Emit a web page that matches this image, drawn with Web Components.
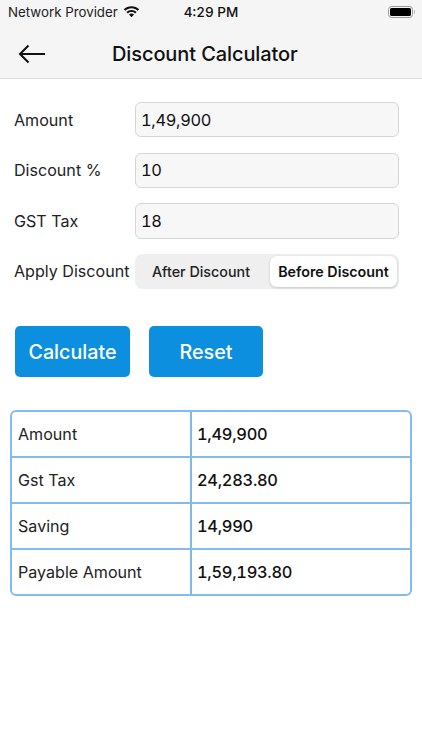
<!DOCTYPE html>
<html>
<head>
<meta charset="utf-8">
<style>
  html, body { margin: 0; background: #fff; }
  body { width: 422px; height: 750px; overflow: hidden; font-family: Inter, "Liberation Sans", sans-serif; color: #111; }
</style>
</head>
<body>
<calc-header title="Discount Calculator"></calc-header>
<calc-form>
  <calc-field label="Amount" value="1,49,900"></calc-field>
  <calc-field label="Discount %" value="10"></calc-field>
  <calc-field label="GST Tax" value="18"></calc-field>
  <calc-segment label="Apply Discount" first="After Discount" second="Before Discount"></calc-segment>
</calc-form>
<calc-actions>
  <calc-button style="width:115px">Calculate</calc-button>
  <calc-button style="width:114px">Reset</calc-button>
</calc-actions>
<calc-table>
  <calc-row label="Amount" value="1,49,900"></calc-row>
  <calc-row label="Gst Tax" value="24,283.80"></calc-row>
  <calc-row label="Saving" value="14,990"></calc-row>
  <calc-row label="Payable Amount" value="1,59,193.80"></calc-row>
</calc-table>
<script>
class CalcHeader extends HTMLElement {
  constructor() {
    super();
    this.attachShadow({ mode: "open" });
    this.shadowRoot.innerHTML = `
      <style>
        :host { display: block; height: 78px; background: #f5f5f5; border-bottom: 1px solid #dedede; }
        .status { height: 24px; display: flex; align-items: center; padding-left: 8px; font-size: 13.3px; color: #222; }
        .wifi { margin-left: 5px; flex: none; }
        .time { margin-left: 44px; font-size: 13.5px; font-weight: 500; font-feature-settings: "tnum"; color: #111; }
        .battery { margin-left: auto; margin-right: 6px; }
        .bar { height: 48px; padding-top: 6px; display: flex; align-items: center; padding-left: 18px; }
        .title { margin-left: 66px; font-size: 20px; font-weight: 500; letter-spacing: -.1px; color: #111; }
      </style>
      <div class="status">
        <span>Network Provider</span>
        <svg class="wifi" width="17" height="12" viewBox="0 0 17 12" fill="#111">
          <path d="M8.5 2.3c2.4 0 4.6.9 6.2 2.5L16.2 3.3C14.2 1.3 11.5.2 8.5.2S2.8 1.3.8 3.3l1.5 1.5c1.6-1.6 3.8-2.5 6.2-2.5z"/>
          <path d="M8.5 6c1.4 0 2.6.5 3.6 1.4l1.5-1.5C12.3 4.6 10.5 3.9 8.5 3.9s-3.8.7-5.1 2l1.5 1.5C5.9 6.5 7.1 6 8.5 6z"/>
          <path d="M8.5 7.6c-1 0-1.8.4-2.5 1l2.5 2.6L11 8.6c-.7-.6-1.5-1-2.5-1z"/>
        </svg>
        <span class="time">4:29 PM</span>
        <svg class="battery" width="28" height="12" viewBox="0 0 28 12">
          <rect x=".5" y=".5" width="24" height="11" rx="3" fill="none" stroke="#999"/>
          <rect x="2" y="2" width="21" height="8" rx="1.6" fill="#000"/>
          <path d="M26 4.2c.6.2 1 .9 1 1.8s-.4 1.6-1 1.8z" fill="#aaa"/>
        </svg>
      </div>
      <div class="bar">
        <svg width="28" height="20" viewBox="0 0 28 20" fill="none" stroke="#111" stroke-width="2">
          <path d="M27 10H2"/><path d="M10.5 1.5 2 10l8.5 8.5"/>
        </svg>
        <span class="title"></span>
      </div>`;
    this.shadowRoot.querySelector(".title").textContent = this.getAttribute("title");
  }
}

class CalcForm extends HTMLElement {
  constructor() {
    super();
    this.attachShadow({ mode: "open" });
    this.shadowRoot.innerHTML = `
      <style>
        :host { display: flex; flex-direction: column; gap: 15.2px; padding: 23px 23px 0 14px; }
      </style>
      <slot></slot>`;
  }
}

class CalcField extends HTMLElement {
  constructor() {
    super();
    this.attachShadow({ mode: "open" });
    this.shadowRoot.innerHTML = `
      <style>
        :host { display: flex; align-items: center; height: 35.4px; font-size: 16.1px; color: #222; }
        .label { width: 121px; flex: none; }
        .box { flex: 1; height: 100%; box-sizing: border-box; background: #f7f7f7; border: 1px solid #d6d6d6; border-radius: 6px; padding-left: 5px; display: flex; align-items: center; font-size: 16.4px; letter-spacing: -.3px; font-feature-settings: "tnum"; color: #111; }
      </style>
      <span class="label"></span>
      <div class="box"></div>`;
    this.shadowRoot.querySelector(".label").textContent = this.getAttribute("label");
    this.shadowRoot.querySelector(".box").textContent = this.getAttribute("value");
  }
}

class CalcSegment extends HTMLElement {
  constructor() {
    super();
    this.attachShadow({ mode: "open" });
    this.shadowRoot.innerHTML = `
      <style>
        :host { display: flex; align-items: center; height: 35.4px; font-size: 16.1px; color: #222; }
        .label { width: 121px; flex: none; white-space: nowrap; }
        .track { flex: 1; height: 100%; box-sizing: border-box; background: #efeff0; border-radius: 8px; padding: 2px; display: flex; font-size: 14.3px; font-weight: 500; color: #222; }
        .opt { display: flex; align-items: center; justify-content: center; white-space: nowrap; }
        .one { width: 128px; padding-right: 5px; }
        .two { flex: 1; background: #fff; border-radius: 7px; box-shadow: 0 1px 3px rgba(0,0,0,.18); color: #111; font-weight: 600; }
      </style>
      <span class="label"></span>
      <div class="track"><span class="opt one"></span><span class="opt two"></span></div>`;
    this.shadowRoot.querySelector(".label").textContent = this.getAttribute("label");
    this.shadowRoot.querySelector(".one").textContent = this.getAttribute("first");
    this.shadowRoot.querySelector(".two").textContent = this.getAttribute("second");
  }
}

class CalcActions extends HTMLElement {
  constructor() {
    super();
    this.attachShadow({ mode: "open" });
    this.shadowRoot.innerHTML = `
      <style>
        :host { display: flex; gap: 19px; padding: 37px 0 0 15px; }
      </style>
      <slot></slot>`;
  }
}

class CalcButton extends HTMLElement {
  constructor() {
    super();
    this.attachShadow({ mode: "open" });
    this.shadowRoot.innerHTML = `
      <style>
        :host { display: flex; align-items: center; justify-content: center; box-sizing: border-box; height: 50.5px; padding-top: 1px; background: #0d8fdf; border-radius: 5px; color: #fff; font-size: 19.7px; font-weight: 500; }
      </style>
      <slot></slot>`;
  }
}

class CalcTable extends HTMLElement {
  constructor() {
    super();
    this.attachShadow({ mode: "open" });
    this.shadowRoot.innerHTML = `
      <style>
        :host { display: block; width: 402px; box-sizing: border-box; margin: 33.5px 0 0 10px; border: 2px solid #85bbea; border-radius: 6px; overflow: hidden; }
      </style>
      <slot></slot>`;
  }
}

class CalcRow extends HTMLElement {
  constructor() {
    super();
    this.attachShadow({ mode: "open" });
    this.shadowRoot.innerHTML = `
      <style>
        :host { display: grid; grid-template-columns: 178px 1fr; height: 46px; box-sizing: border-box; border-bottom: 2px solid #85bbea; }
        :host(:last-child) { border-bottom: 0; height: 44px; }
        div { display: flex; align-items: center; }
        .k { padding-left: 6px; font-size: 16.1px; color: #222; }
        .v { padding-left: 5px; font-size: 16.4px; font-weight: 500; letter-spacing: -.27px; font-feature-settings: "tnum"; color: #111; border-left: 2px solid #7fb7e9; }
      </style>
      <div class="k"></div>
      <div class="v"></div>`;
    this.shadowRoot.querySelector(".k").textContent = this.getAttribute("label");
    this.shadowRoot.querySelector(".v").textContent = this.getAttribute("value");
  }
}

customElements.define("calc-header", CalcHeader);
customElements.define("calc-form", CalcForm);
customElements.define("calc-field", CalcField);
customElements.define("calc-segment", CalcSegment);
customElements.define("calc-actions", CalcActions);
customElements.define("calc-button", CalcButton);
customElements.define("calc-table", CalcTable);
customElements.define("calc-row", CalcRow);
</script>
</body>
</html>
